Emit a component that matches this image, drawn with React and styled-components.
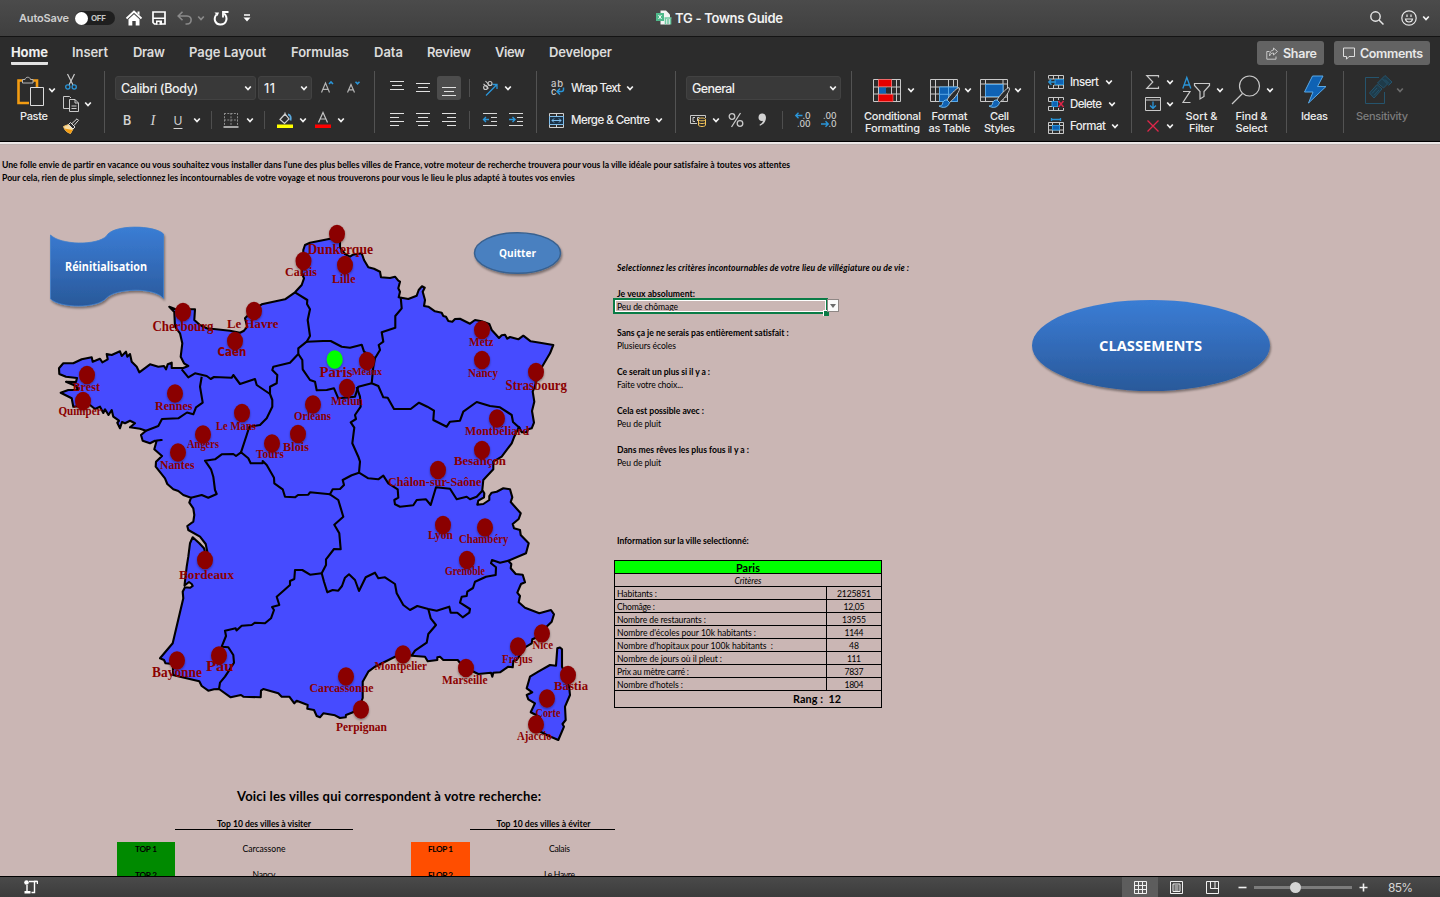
import React, { useLayoutEffect, useRef, useState } from "react";
import styled, { createGlobalStyle } from "styled-components";

const Global = createGlobalStyle`
  *, *::before, *::after { box-sizing: border-box; }
  body { margin: 0; background: #cab6b4; overflow: hidden; }
`;

const UI = `Inter, "Liberation Sans", sans-serif`;
const CELL = `Lato, "Open Sans", sans-serif`;

/* ---------- text that fills a known measure ---------- */
const FitSpan = styled.span`
  display: inline-block;
  white-space: pre;
  flex: none;
`;
function Fit({ w, children }) {
  const ref = useRef(null);
  const [ls, setLs] = useState(0);
  useLayoutEffect(() => {
    const natural = ref.current.getBoundingClientRect().width;
    setLs((w - natural) / Math.max(1, children.length - 1));
  }, [w, children]);
  return (
    <FitSpan ref={ref} style={{ letterSpacing: ls, marginRight: -ls }}>
      {children}
    </FitSpan>
  );
}

/* ---------- window frame ---------- */
const Window = styled.div`
  width: 1440px;
  height: 897px;
  display: flex;
  flex-direction: column;
  overflow: hidden;
  font-family: ${UI};
  color: #e6e6e6;
`;
const TitleBar = styled.header`
  height: 37px;
  flex: none;
  display: grid;
  grid-template-columns: 1fr auto 1fr;
  align-items: center;
  background: linear-gradient(#4b4b4b, #3f3f3f);
  border-bottom: 1px solid #141414;
`;
const QuickBar = styled.div`
  display: flex;
  align-items: center;
  padding-left: 19px;
  font-size: 11px;
  font-weight: 600;
  color: #cfcfcf;
`;
const Toggle = styled.span`
  width: 40px;
  height: 14px;
  margin-left: 6px;
  border-radius: 7px;
  background: #1f1f1f;
  display: flex;
  align-items: center;
  font-size: 8px;
  font-weight: 700;
  color: #c4c4c4;
  &::before {
    content: "";
    width: 13px;
    height: 13px;
    margin-right: 3px;
    border-radius: 50%;
    background: #fff;
  }
`;
const DocTitle = styled.div`
  display: flex;
  align-items: center;
  gap: 3px;
  margin-left: -1px;
  font-size: 13px;
  font-weight: 600;
  color: #f2f2f2;
`;
const TitleTools = styled.div`
  display: flex;
  align-items: center;
  justify-content: flex-end;
  padding-right: 10px;
`;
const TabBar = styled.nav`
  height: 34px;
  flex: none;
  display: flex;
  align-items: flex-start;
  padding: 4px 10px 0 11px;
  background: #2c2c2c;
`;
const Tab = styled.span`
  margin-right: ${(p) => p.$gap}px;
  height: 24px;
  line-height: 23px;
  font-size: 13px;
  font-weight: ${(p) => (p.$active ? 700 : 600)};
  color: ${(p) => (p.$active ? "#efefef" : "#dcdcdc")};
  border-bottom: 3px solid ${(p) => (p.$active ? "#e2e2e2" : "transparent")};
  border-radius: 1px;
`;
const TabButton = styled.button`
  display: flex;
  align-items: center;
  gap: 5px;
  width: ${(p) => p.$w}px;
  height: 24px;
  margin-left: ${(p) => p.$ml};
  padding: 0 0 0 9px;
  border: 0;
  border-radius: 3px;
  background: #636363;
  color: #e8e8e8;
  font: 600 12.5px ${UI};
`;

/* ---------- ribbon ---------- */
const Ribbon = styled.div`
  height: 74px;
  flex: none;
  display: flex;
  align-items: flex-start;
  background: #2c2c2c;
  box-shadow: inset 0 -1px 0 #bdb0ae, inset 0 -3px 0 #ece8e7, inset 0 -4px 0 #000;
`;
const Group = styled.section`
  width: ${(p) => p.$w}px;
  height: 62px;
  flex: none;
  display: flex;
  flex-direction: ${(p) => (p.$side ? "row" : "column")};
  gap: ${(p) => (p.$side ? 0 : 8)}px;
  padding-top: ${(p) => (p.$side ? 0 : 5)}px;
  border-right: 1px solid ${(p) => (p.$last ? "transparent" : "#535353")};
`;
const Row = styled.div`
  height: 24px;
  flex: none;
  display: flex;
  align-items: center;
  font-size: 11.5px;
  font-weight: 500;
  color: #ededed;
`;
const Stack = styled.div`
  margin-left: ${(p) => p.$ml || 0}px;
  display: flex;
  flex-direction: column;
`;
const StackRow = styled(Row)`
  height: 22px;
`;
const Item = styled.span`
  flex: none;
  width: ${(p) => p.$w}px;
  height: 24px;
  margin-left: ${(p) => p.$ml || 0}px;
  display: flex;
  align-items: center;
  justify-content: center;
  border-radius: 3px;
  background: ${(p) => (p.$on ? "#4c4c4c" : "transparent")};
`;
const Words = styled.span`
  margin-left: ${(p) => p.$ml}px;
`;
const Sep = styled.i`
  width: 1px;
  height: 18px;
  margin-left: ${(p) => p.$ml}px;
  background: #4e4e4e;
`;
const Combo = styled.div`
  width: ${(p) => p.$w}px;
  height: 24px;
  margin-left: ${(p) => p.$ml}px;
  padding: 0 3px 0 5px;
  display: flex;
  align-items: center;
  justify-content: space-between;
  border-radius: 3px;
  background: #393939;
  border: 1px solid #424242;
  font-size: 12.5px;
  font-weight: 500;
  color: #f0f0f0;
`;
const Big = styled.div`
  width: ${(p) => p.$w}px;
  margin-left: ${(p) => p.$ml}px;
  padding-top: 5px;
  font-size: 11px;
  font-weight: 500;
  line-height: 12px;
  color: ${(p) => (p.$dim ? "#7d7d7d" : "#ededed")};
`;
const BigIcon = styled.div`
  height: 28px;
  margin-bottom: 6px;
  padding-left: ${(p) => p.$pl}px;
  display: flex;
  align-items: center;
`;
const BigLabel = styled.div`
  display: flex;
  justify-content: center;
`;
const Svg = styled.svg`
  display: block;
  flex: none;
  overflow: visible;
  margin-left: ${(p) => p.$ml || 0}px;
`;

const Icon = ({ w, h, ml, children }) => (
  <Svg width={w} height={h} viewBox={`0 0 ${w} ${h}`} $ml={ml} fill="none" stroke="#c9c9c9" strokeWidth="1">
    {children}
  </Svg>
);
const Chev = ({ ml, c = "#f4f4f4" }) => (
  <Icon w={8} h={6} ml={ml}>
    <path d="M1.200 1.500 4 4.500 6.800 1.500" stroke={c} strokeWidth="1.700" />
  </Icon>
);
const Glyph = styled.span`
  font-family: ${(p) => (p.$serif ? '"Liberation Serif", serif' : UI)};
  font-size: ${(p) => p.$s}px;
  font-weight: ${(p) => p.$b || 400};
  font-style: ${(p) => (p.$i ? "italic" : "normal")};
  text-decoration: ${(p) => (p.$u ? "underline" : "none")};
  text-underline-offset: 3px;
  color: #d2d2d2;
`;
const Lines = ({ rows }) => (
  <Icon w={14} h={14}>
    {rows.map(([x1, x2, y]) => (
      <path key={y} d={`M${x1} ${y}.5H${x2}`} stroke="#e0e0e0" />
    ))}
  </Icon>
);
const GridLines = () => (
  <path d="M.5 .5H27.500V22.500H.5ZM.5 8H27.500M.5 15H27.500M5.500 .5V22.500M18.500 .5V22.500M23.500 .5V22.500" />
);
const Brush = () => (
  <>
    <path d="M29 8.500C26 9.500 19 17 17 21L19.500 23.500C23 21 29 14 29.500 10Z" fill="#2c2c2c" stroke="#c9c9c9" />
    <path d="M17 21C14 20.500 12.500 23 12.500 25 12 26.500 10.500 27 9 27 12 29 18 29.500 19.500 23.500Z" fill="#0f62b4" stroke="#6fb9ee" />
  </>
);

function FontGroup() {
  return (
    <Group $w={270}>
      <Row>
        <Combo $w={141} $ml={10}><Fit w={77}>Calibri (Body)</Fit><Chev /></Combo>
        <Combo $w={54} $ml={2}><Fit w={11}>11</Fit><Chev /></Combo>
        <Icon w={16} h={16} ml={7}>
          <path d="M2.500 12.500 6.500 3 10.500 12.500M4 9.300H9" stroke="#b5b5b5" strokeWidth="1.200" />
          <path d="M10 4 12 2 14 4" stroke="#2a95d8" strokeWidth="1.600" />
        </Icon>
        <Icon w={16} h={16} ml={10}>
          <path d="M2.500 12.500 6 4.500 9.500 12.500M3.700 9.800H8.300" stroke="#b5b5b5" strokeWidth="1.200" />
          <path d="M10.500 1.800 12.500 3.800 14.500 1.800" stroke="#2a95d8" strokeWidth="1.600" />
        </Icon>
      </Row>
      <Row>
        <Item $w={14} $ml={15}><Glyph $s={12.5} $b={600}>B</Glyph></Item>
        <Item $w={14} $ml={12}><Glyph $s={14.5} $serif $i>I</Glyph></Item>
        <Item $w={14} $ml={11}><Glyph $s={12} $u>U</Glyph></Item>
        <Chev ml={8} />
        <Sep $ml={10} />
        <Icon w={16} h={16} ml={11}>
          <path d="M1 1.500H15M1.500 1V14M14.500 1V14M8 1V14M1 8H15" stroke="#8c8c8c" strokeDasharray="2 1.300" />
          <path d="M.5 15H15.500" stroke="#e8e8e8" strokeWidth="1.300" />
        </Icon>
        <Chev ml={7} />
        <Sep $ml={10} />
        <Icon w={16} h={16} ml={12}>
          <path d="M3 7.500 8 2 12 7 7.500 11.500ZM8 4V.5" stroke="#d0d0d0" strokeWidth="1.200" />
          <path d="M11 2.500C14 3 14 6 13.500 8.500" stroke="#5aa9dd" strokeWidth="1.800" />
          <path d="M0 12.500H16V16H0Z" fill="#ff0" stroke="none" />
        </Icon>
        <Chev ml={6} />
        <Icon w={16} h={16} ml={8}>
          <path d="M3.500 10.500 8 .5 12.500 10.500M5.200 7H10.800" stroke="#c4c4c4" strokeWidth="1.200" />
          <path d="M0 12.500H16V16H0Z" fill="#f00" stroke="none" />
        </Icon>
        <Chev ml={6} />
      </Row>
    </Group>
  );
}

function AlignGroup() {
  return (
    <Group $w={162}>
      <Row>
        <Item $w={14} $ml={15}><Lines rows={[[0, 14, 0], [2, 12, 4], [0, 14, 8]]} /></Item>
        <Item $w={14} $ml={12}><Lines rows={[[0, 14, 2], [2, 12, 6], [0, 14, 10]]} /></Item>
        <Item $w={24} $ml={7} $on><Lines rows={[[0, 14, 6], [2, 12, 10], [0, 14, 14]]} /></Item>
        <Sep $ml={8} />
        <Icon w={16} h={16} ml={12}>
          <path d="M4 15.500 14.500 5M10.500 4.500H15V9" stroke="#2a95d8" strokeWidth="1.300" />
          <g stroke="#c9c9c9" strokeWidth="1.100">
            <circle cx="3.600" cy="7.500" r="2" />
            <path d="M1.500 3.800 6.500 8.500" />
            <circle cx="8" cy="3.500" r="2" />
            <path d="M3.500 1 8 6" />
          </g>
        </Icon>
        <Chev ml={6} />
      </Row>
      <Row>
        <Item $w={14} $ml={15}><Lines rows={[[0, 14, 0], [0, 9, 4], [0, 14, 8], [0, 9, 12]]} /></Item>
        <Item $w={14} $ml={12}><Lines rows={[[0, 14, 0], [2, 12, 4], [0, 14, 8], [2, 12, 12]]} /></Item>
        <Item $w={14} $ml={12}><Lines rows={[[0, 14, 0], [5, 14, 4], [0, 14, 8], [5, 14, 12]]} /></Item>
        <Sep $ml={13} />
        <Icon w={14} h={14} ml={13}>
          <path d="M0 .5H14M8 4.500H14M8 8.500H14M0 12.500H14" stroke="#d8d8d8" />
          <path d="M6 6.500H.8M3 4 .5 6.500 3 9" stroke="#2a95d8" strokeWidth="1.400" />
        </Icon>
        <Icon w={14} h={14} ml={12}>
          <path d="M0 .5H14M8 4.500H14M8 8.500H14M0 12.500H14" stroke="#d8d8d8" />
          <path d="M0 6.500H5.500M3.500 4 6 6.500 3.500 9" stroke="#2a95d8" strokeWidth="1.400" />
        </Icon>
      </Row>
    </Group>
  );
}

const SvgText = styled.text`
  font-family: ${UI};
  font-size: ${(p) => p.$s}px;
  fill: ${(p) => p.$c || "#c9c9c9"};
  stroke: none;
`;

function WrapGroup() {
  return (
    <Group $w={139}>
      <Row>
        <Icon w={16} h={16} ml={13}>
          <SvgText $s={9.5} x="1" y="6.500" textLength="12">ab</SvgText>
          <SvgText $s={9.5} x="1" y="15">c</SvgText>
          <path d="M13.500 7.500V9.500Q13.500 11.500 11.500 11.500H7.500M10 8.500 7 11.500 10 14.500" stroke="#2a95d8" strokeWidth="1.500" />
        </Icon>
        <Words $ml={5}><Fit w={50}>Wrap Text</Fit></Words>
        <Chev ml={5} />
      </Row>
      <Row>
        <Icon w={15} h={15} ml={12}>
          <path d="M.5 .5H14.500V14.500H.5ZM7.500 .5V3.500M7.500 11.500V14.500" stroke="#d0d0d0" />
          <path d="M.5 3.500H14.500V11.500H.5Z" stroke="#7dbdec" fill="#1b3247" />
          <path d="M3 7.500H12M5 5.500 3 7.500 5 9.500M10 5.500 12 7.500 10 9.500" stroke="#7dbdec" />
        </Icon>
        <Words $ml={7}><Fit w={79}>{"Merge & Centre"}</Fit></Words>
        <Chev ml={5} />
      </Row>
    </Group>
  );
}

function NumberGroup() {
  return (
    <Group $w={176}>
      <Row>
        <Combo $w={155} $ml={10}><Fit w={43}>General</Fit><Chev /></Combo>
      </Row>
      <Row>
        <Icon w={16} h={14} ml={14}>
          <path d="M7 10.500H.5V2.500H15.500V5M5 4.500H3V8.500H5M7.500 8V4.500H9.500" stroke="#c9c9c9" />
          <path d="M8.500 6.500C8.500 4.500 15.500 4.500 15.500 6.500V12C15.500 14 8.500 14 8.500 12Z" fill="#2c2c2c" stroke="#f5c55a" />
          <path d="M8.500 6.500C8.500 8.300 15.500 8.300 15.500 6.500M8.500 9.300C8.500 11 15.500 11 15.500 9.300" stroke="#f5c55a" />
        </Icon>
        <Chev ml={6} />
        <Icon w={16} h={16} ml={8}>
          <path d="M12.500 1 3.500 15" strokeWidth="1.300" />
          <circle cx="4" cy="4.500" r="2.800" strokeWidth="1.300" />
          <circle cx="12" cy="11.500" r="2.800" strokeWidth="1.300" />
        </Icon>
        <Icon w={8} h={14} ml={14}>
          <path d="M4 .5C6.500 .5 8 2 8 4.800 8 8.500 5.500 11.500 2 12.800L1.500 11.800C3.500 10.700 4.800 9.300 5 7.800 2.500 8.500 .5 7 .5 4.500 .5 2 2 .5 4 .5Z" fill="#d2d2d2" stroke="none" />
        </Icon>
        <Sep $ml={16} />
        <Icon w={16} h={16} ml={12}>
          <path d="M.8 3.500H7.500M3.500 .8 .8 3.500 3.500 6.200" stroke="#2a95d8" strokeWidth="1.400" />
          <SvgText $s={9} x="7.500" y="7" textLength="8" lengthAdjust="spacingAndGlyphs">.0</SvgText>
          <SvgText $s={9} x="2" y="15" textLength="13.500" lengthAdjust="spacingAndGlyphs">.00</SvgText>
        </Icon>
        <Icon w={16} h={16} ml={10}>
          <SvgText $s={9} x="2" y="7" textLength="13.500" lengthAdjust="spacingAndGlyphs">.00</SvgText>
          <path d="M0 12H6.700M4.500 9.300 7.200 12 4.500 14.700" stroke="#2a95d8" strokeWidth="1.400" />
          <SvgText $s={9} x="7.500" y="15" textLength="8" lengthAdjust="spacingAndGlyphs">.0</SvgText>
        </Icon>
      </Row>
    </Group>
  );
}

function StyleGroup() {
  return (
    <Group $w={183} $side>
      <Big $w={57} $ml={12}>
        <BigIcon $pl={9}>
          <Icon w={28} h={23}>
            <GridLines />
            <path d="M5.500 .5H18.500V7.500H5.500ZM5.500 15.500H20V22.500H5.500Z" fill="#e60000" stroke="#ff6a6a" strokeWidth=".6" />
            <path d="M13.500 8.500H18V14.500H13.500Z" fill="#2c2c2c" stroke="none" />
            <path d="M6 8.500H13V14.500H6Z" fill="#0f62b4" stroke="none" />
          </Icon>
          <Chev ml={6} />
        </BigIcon>
        <BigLabel><Fit w={57}>Conditional</Fit></BigLabel>
        <BigLabel><Fit w={55}>Formatting</Fit></BigLabel>
      </Big>
      <Big $w={41} $ml={8}>
        <BigIcon $pl={1}>
          <Icon w={30} h={23}>
            <GridLines />
            <path d="M9.500 8H27.500V22.500H9.500Z" fill="#0f62b4" stroke="#5aa9e6" />
            <path d="M9.500 15.300H27.500M18.500 8V22.500" stroke="#5aa9e6" />
            <Brush />
          </Icon>
          <Chev ml={4} />
        </BigIcon>
        <BigLabel><Fit w={36}>Format</Fit></BigLabel>
        <BigLabel><Fit w={42}>as Table</Fit></BigLabel>
      </Big>
      <Big $w={41} $ml={9}>
        <BigIcon $pl={1}>
          <Icon w={30} h={23}>
            <path d="M.5 .5H27.500V22.500H.5ZM.5 5H27.500M.5 18H27.500M5.500 .5V22.500M23 .5V22.500" />
            <path d="M5.500 5.500H23V17.500H5.500Z" fill="#0f62b4" stroke="#5aa9e6" />
            <Brush />
          </Icon>
          <Chev ml={4} />
        </BigIcon>
        <BigLabel><Fit w={19}>Cell</Fit></BigLabel>
        <BigLabel><Fit w={31}>Styles</Fit></BigLabel>
      </Big>
    </Group>
  );
}

function CellsGroup() {
  return (
    <Group $w={97} $side>
      <Stack $ml={13}>
        <StackRow>
          <Icon w={16} h={14}>
            <path d="M.5 3.500V.5H15.500V13.500H.5V10.500M5.500 .5V4M10.500 .5V4M5.500 10V13.500M10.500 10V13.500M.5 4H15.500M6 10H15.500" />
            <path d="M7 4.500H15.500V9.500H7Z" fill="#0f62b4" stroke="#2a95d8" />
            <path d="M.8 7H8M3.500 4.300 .8 7 3.500 9.700" stroke="#2a95d8" strokeWidth="1.400" />
          </Icon>
          <Words $ml={6}><Fit w={29}>Insert</Fit></Words>
          <Chev ml={6} />
        </StackRow>
        <StackRow>
          <Icon w={16} h={14}>
            <path d="M.5 4.500V.5H15.500V3M.5 9.500V13.500H15.500V11M5.500 .5V4M10.500 .5V3M5.500 10V13.500M10.500 11V13.500M.5 4.500H10M.5 9.500H10" />
            <path d="M4 4.500H9.500V9.500H4Z" fill="#0f62b4" stroke="#2a95d8" />
            <path d="M10.500 4 15.500 10M15.500 4 10.500 10" stroke="#e0264a" strokeWidth="1.400" />
          </Icon>
          <Words $ml={6}><Fit w={32}>Delete</Fit></Words>
          <Chev ml={6} />
        </StackRow>
        <StackRow>
          <Icon w={16} h={16}>
            <path d="M.5 4.500H15.500V15.500H.5ZM.5 7.500H15.500M.5 12H15.500M4.500 4.500V15.500M11.500 4.500V15.500" />
            <path d="M4.500 7.500H11.500V12H4.500Z" fill="#0f62b4" stroke="#2a95d8" />
            <path d="M3.500 1.500H12.500M3.500 0V3M12.500 0V3" stroke="#2a95d8" strokeWidth="1.300" />
          </Icon>
          <Words $ml={6}><Fit w={36}>Format</Fit></Words>
          <Chev ml={5} />
        </StackRow>
      </Stack>
    </Group>
  );
}

function EditGroup() {
  return (
    <Group $w={155} $side>
      <Stack $ml={13}>
        <StackRow>
          <Icon w={16} h={14}>
            <path d="M13.500 2.500V.7H1.800L7.800 7 1.800 13.300H13.500V11.500" strokeWidth="1.200" />
          </Icon>
          <Chev ml={5} />
        </StackRow>
        <StackRow>
          <Icon w={16} h={14}>
            <path d="M.5 .5H15.500V13.500H.5ZM.5 3H15.500" />
            <path d="M8 4.500V11M5 8.500 8 11.300 11 8.500" stroke="#2a95d8" strokeWidth="1.300" />
          </Icon>
          <Chev ml={5} />
        </StackRow>
        <StackRow>
          <Icon w={16} h={14}>
            <path d="M2.500 1.500 13.500 12.500M13.500 1.500 2.500 12.500" stroke="#e0264a" strokeWidth="1.300" />
          </Icon>
          <Chev ml={5} />
        </StackRow>
      </Stack>
      <Big $w={45} $ml={5}>
        <BigIcon $pl={3}>
          <Icon w={29} h={28}>
            <path d="M.8 12.500 4.800 1.500 8.800 12.500M2.200 9H7.400" stroke="#2a95d8" strokeWidth="1.300" />
            <path d="M1 15.500H8L1 26.500H8.500" strokeWidth="1.200" />
            <path d="M12.500 7.500H27.500V9.500L22 15.500V20.500L18 23V15.500L12.500 9.500Z" strokeWidth="1.200" />
          </Icon>
          <Chev ml={5} />
        </BigIcon>
        <BigLabel><Fit w={32}>{"Sort &"}</Fit></BigLabel>
        <BigLabel><Fit w={25}>Filter</Fit></BigLabel>
      </Big>
      <Big $w={45} $ml={5}>
        <BigIcon $pl={2}>
          <Icon w={30} h={30}>
            <circle cx="18.500" cy="11" r="10" strokeWidth="1.200" />
            <path d="M11.500 18.500 1 29" strokeWidth="1.300" />
          </Icon>
          <Chev ml={5} />
        </BigIcon>
        <BigLabel><Fit w={32}>{"Find &"}</Fit></BigLabel>
        <BigLabel><Fit w={32}>Select</Fit></BigLabel>
      </Big>
    </Group>
  );
}

function RibbonBar() {
  return (
    <Ribbon>
      <Group $w={105} $side>
        <Big $w={44} $ml={12}>
          <BigIcon $pl={5}>
            <Icon w={27} h={28}>
              <path d="M12 27H1.500V4.500H20V11" stroke="#f39c12" strokeWidth="2.600" />
              <path d="M5.500 7V3.500H8C8.500 .5 13 .5 13.500 3.500H16V7Z" fill="#2c2c2c" stroke="#b5b5b5" />
              <path d="M13.500 11.500H26.500V29.500H13.500Z" fill="#2c2c2c" stroke="#dcdcdc" />
            </Icon>
            <Chev ml={4} />
          </BigIcon>
          <BigLabel><Fit w={28}>Paste</Fit></BigLabel>
        </Big>
        <Stack $ml={7}>
          <StackRow>
            <Icon w={16} h={16}>
              <path d="M4.500 0 10 11M11.500 0 6 11" strokeWidth="1.200" />
              <circle cx="4.800" cy="13" r="2.100" stroke="#2a95d8" strokeWidth="1.300" />
              <circle cx="11.200" cy="13" r="2.100" stroke="#2a95d8" strokeWidth="1.300" />
            </Icon>
          </StackRow>
          <StackRow>
            <Icon w={16} h={16}>
              <path d="M6 12.500H.5V.5H6.500L8 2" />
              <path d="M6.500 3.500H12L15.500 7V15.500H6.500ZM12 3.500V7H15.500M8.500 10H13.500M8.500 12.500H13.500" />
            </Icon>
            <Chev ml={5} />
          </StackRow>
          <StackRow>
            <Icon w={16} h={16}>
              <path d="M.5 8.500 5.500 6.500 10 11 7.500 15.500C4 14.500 1.500 12 .5 8.500Z" fill="#f6dca4" stroke="#f2c166" />
              <path d="M1.500 10.500 9.500 12 7.500 15.500C5 15 2.500 13 1.500 10.500Z" fill="#f39c12" stroke="none" />
              <path d="M5.500 6.500 7.500 4.500 12 9 10 11ZM9 5.500 14 .8 15.500 2.300 11 7.500" fill="#2c2c2c" stroke="#dcdcdc" />
            </Icon>
          </StackRow>
        </Stack>
      </Group>
      <FontGroup />
      <AlignGroup />
      <WrapGroup />
      <NumberGroup />
      <StyleGroup />
      <CellsGroup />
      <EditGroup />
      <Group $w={57} $side>
        <Big $w={31} $ml={12}>
          <BigIcon $pl={4}>
            <Icon w={24} h={30}>
              <path d="M9.500 1H20L14.500 11.500H23L5.500 28 10 17H1.500Z" fill="#0f62b4" stroke="#5aa9e6" />
            </Icon>
          </BigIcon>
          <BigLabel><Fit w={27}>Ideas</Fit></BigLabel>
        </Big>
      </Group>
      <Group $w={96} $side $last>
        <Big $w={52} $ml={12} $dim>
          <BigIcon $pl={9}>
            <Icon w={28} h={30}>
              <g stroke="#25546d">
                <path d="M14 2.500H.5V28.500H19.500V17" />
                <path d="M4.500 18 12 9.500 17 14 9 23ZM7 18.500 12 13M9 20.500 14 15" fill="#1e3b4a" />
                <path d="M12.500 8 17 3.500 22.500 9 18.500 13ZM17 3.500 20 .5 27 7 23.500 10.500M20 4.500 24 8.500" fill="#1e3b4a" />
              </g>
            </Icon>
            <Chev ml={3} c="#6c6c6c" />
          </BigIcon>
          <BigLabel><Fit w={52}>Sensitivity</Fit></BigLabel>
        </Big>
      </Group>
    </Ribbon>
  );
}

/* ---------- worksheet ---------- */
const Sheet = styled.main`
  position: relative;
  height: 731px;
  flex: none;
  overflow: hidden;
  background: #cab6b4;
  font-family: ${CELL};
  font-size: 8.6px;
  line-height: 13px;
  color: #000;
`;
const Intro = styled.div`
  padding: 14px 0 0 2px;
  height: 117px;
  font-weight: 700;
`;
const Line = styled.div`
  height: 13px;
  white-space: nowrap;
  font-weight: ${(p) => (p.$b ? 700 : 400)};
  font-style: ${(p) => (p.$i ? "italic" : "normal")};
`;
const Criteria = styled.div`
  margin-left: 614px;
  width: 268px;
  height: 273px;
  padding-left: 3px;
`;
const InfoHead = styled.div`
  margin-left: 614px;
  padding-left: 3px;
  height: 13px;
`;
const Pair = styled.div`
  margin-top: 13px;
`;
const Picked = styled.div`
  position: relative;
  height: 13px;
  &::before {
    content: "";
    position: absolute;
    left: -4px;
    top: -3px;
    width: 215px;
    height: 16px;
    border: 2px solid #0a7c46;
    box-shadow: inset 0 0 0 1px #fff;
  }
  &::after {
    content: "";
    position: absolute;
    left: 206px;
    top: 9px;
    width: 6px;
    height: 6px;
    background: #0a7c46;
    border: solid #fff;
    border-width: 1px 0 0 1px;
  }
`;
const DropArrow = styled.i`
  position: absolute;
  z-index: 1;
  left: 210px;
  top: -2px;
  width: 12px;
  height: 13px;
  display: flex;
  align-items: center;
  justify-content: center;
  background: #fafafa;
  border: 1px solid #8f8785;
  &::before {
    content: "";
    border: solid transparent;
    border-width: 4px 3.5px 0;
    border-top-color: #6b6b6b;
  }
`;
const InfoTable = styled.div`
  margin: 12px 0 0 614px;
  width: 268px;
  border: 1px solid #000;
`;
const InfoRow = styled.div`
  height: ${(p) => p.$h || 13}px;
  line-height: 14px;
  display: grid;
  grid-template-columns: ${(p) => (p.$span ? "1fr" : "211px 1px 1fr")};
  justify-items: ${(p) => (p.$span ? "center" : "start")};
  background: ${(p) => (p.$lime ? "#00ff00" : "transparent")};
  border-bottom: ${(p) => (p.$end ? 0 : 1)}px solid #000;
  font-size: ${(p) => (p.$s ? p.$s : 8.6)}px;
  font-weight: ${(p) => (p.$b ? 700 : 400)};
  font-style: ${(p) => (p.$i ? "italic" : "normal")};
`;
const InfoName = styled.span`
  padding-left: 2px;
`;
const Rule = styled.i`
  width: 1px;
  height: 12px;
  background: #000;
`;
const InfoValue = styled.span`
  justify-self: center;
`;
const Rank = styled.span`
  justify-self: start;
  padding: 1px 0 0 178px;
`;
const Results = styled.section`
  margin-top: 79px;
  width: 615px;
`;
const ResultTitle = styled.h2`
  margin: 0;
  height: 18px;
  padding-left: 237px;
  font-size: 13px;
  line-height: 18px;
`;
const ResultCols = styled.div`
  display: flex;
  margin-top: 13px;
  padding-left: 117px;
  gap: 58px;
`;
const ResultCol = styled.div`
  display: grid;
  grid-template-columns: ${(p) => p.$cols};
`;
const ColHead = styled.div`
  grid-column: 2;
  height: 12px;
  margin-bottom: 12px;
  padding-left: ${(p) => p.$shift || 0}px;
  display: flex;
  justify-content: center;
  font-weight: 700;
  border-bottom: 1px solid #000;
`;
const Badge = styled.div`
  grid-column: 1;
  height: 26px;
  text-align: center;
  font-size: 8.2px;
  line-height: 14px;
  font-weight: 700;
  background: ${(p) => p.$c};
`;
const Town = styled.div`
  height: 26px;
  padding-left: ${(p) => p.$shift || 0}px;
  line-height: 14px;
  text-align: center;
`;

const Drawing = styled.svg`
  position: absolute;
  left: 0;
  top: 0;
  pointer-events: none;
`;
const CityName = styled.text`
  font-family: ${(p) => (p.$sans ? '"DejaVu Sans", sans-serif' : '"Liberation Serif", serif')};
  font-weight: 700;
  fill: #8b0000;
`;
const ShapeLabel = styled.text`
  font-family: "Comic Sans MS", "Open Sans", sans-serif;
  font-weight: 700;
  fill: #fff;
`;

const MAINLAND =
  "M303.300 250 305 245 310 242.700 332.700 238.300 340 240.700 340 247.300 345 254 350 256.700 353 254.700 361.700 253.300 364 260 368.300 267.300 374 268.700 380 271.700 381 277.300 390 278 395 276.700 398.300 280.700 400 281.700 398.300 288.300 400 291.700 398.700 297.300 408.300 299 416.700 295.700 418.700 290 422 286.300 424.700 287.700 422.700 291.700 425 300 424 306 428.300 306.700 435 311.300 441.700 312.700 443.300 316 446 316.700 448.300 321 452.300 321.700 455 319 460 318.700 470 323.700 475 320 481.700 321.300 489.300 324 491.700 330 499 338 501.700 335.300 505 334.700 507.300 338.700 510 337 518.300 339.300 523.300 335.700 530.700 341.300 540 342.700 553.300 345 550 353.300 545 361.700 538.300 373.300 536 383.300 532.700 391.700 534.300 401.700 532 411 534 422.700 531.700 428.300 528.300 429.300 526.700 432.300 521.700 432.300 519 427 514 437.300 511.700 443.300 501.700 456.700 493.300 461.700 493.300 469.300 483.300 480 482.300 490 484.300 493.300 484 497.300 478.300 500.700 477.300 504.700 483.300 504 489.300 500 489.300 496 491.700 492.700 496.700 491.700 503.300 488.300 510 489.300 512.300 497.300 510.700 502 520.700 513.300 518.700 519 512.700 524 514 528.300 520 530 520.700 535 528.700 543.300 526 553.300 508.300 560.700 511.300 564 510.700 568.300 515.700 574 522.700 574.700 525 582.300 521 584 517.300 592.700 520 596 518.700 602.300 525 607.700 539.300 613.300 551 610 554 614.300 551.700 621.700 545 628.300 538.300 636.700 532.300 639.300 531.700 643.300 525 647.300 520 655 516.700 660 513.300 661 512.700 667.300 508.300 666.700 500 672.300 493.300 672.700 492.300 676.700 491 672.700 478.300 674 470 670 461.700 665 457.700 660 443.300 660 440 656.700 437.300 657.300 437.300 660 427.700 661.300 425 656.700 411.700 655.700 403.300 654.300 395 656.700 385 661.700 375 666.700 368.300 671.700 362.700 681.700 362.700 698 358.300 710 351.700 712.700 346 715 345.700 717.300 340 718 335 715.300 323.300 713.300 320 717.300 316.700 716 314 710 307.300 708.700 307.700 705 296.700 700.700 294.300 703.300 289.300 696.700 281.700 696.700 278.300 693.300 263.300 689 261 690.700 260.700 697.300 243.300 696.700 241 695 230.700 697.300 219 689 214 689.300 208.300 690.700 201.700 686 199.300 681.300 180 676.700 173 675 173 664 165.500 663.300 164 660 160 658.300 172.700 643.300 183.300 598.300 182.700 591.700 185 587.300 190 587.800 192.700 586 191.700 584 189 582 184.500 585.500 186.700 566.700 188.300 556.700 190 543.300 192.700 537.300 199.300 543.300 204 548.300 205 552 207.300 551.700 205.700 544 200 536.700 188.300 530 187.300 526 193.300 521.700 194.300 515 193.300 508.300 189.300 502.700 191 497.700 183.300 495 178.300 491 173.300 489.300 167.300 484 165 478.300 155.700 466.700 156 461.700 162 456 154.300 449.300 156.700 440.500 161.700 440 155 440.700 150 443.300 142.700 440.700 141 435 146 430.700 140 428.700 130 427.300 135 423.300 130 420.700 125 423.300 122 422 120 428.300 117.300 422.700 119 420.700 113.300 416.700 111.700 410 108.500 415 105 409.300 103.300 413 100 406.700 95 409 90 405 73.300 406.700 71.700 398.300 60.700 392.700 68.300 390 78 390 76 386 66 381.700 76 382 77 378 66 376.700 59.300 374 59 368.300 63.300 363.300 73.300 363.300 81.700 359.300 91.700 357.300 92.700 361.700 100 358.700 102.300 362.300 107.700 359.300 106.700 354 111.700 355 120 351.300 121.700 356 126 351.700 127.300 356.700 130 354 131.700 361.700 136.700 366.700 139.300 372.300 150 364.300 158.300 366.700 164 366 166 369.300 167.700 364.300 171.700 362.700 171.700 368 183.300 368 188.300 366 184 363.300 180.700 356.700 182.300 343.300 180 333.300 175 326.700 174.300 312 169.300 306.700 175 309 195 309.300 194.300 320 200 325 206.700 328.300 230 330.700 240 332.700 244 330.700 247.300 326.700 245 318.300 253.300 310 261.700 304.300 285 299.300 295 292.300 301.700 285 304 278.300 301.700 273.300 303.300 262Z";
const CORSICA =
  "M557.300 648.300 560 647.500 562 649.300 562 666.700 566 675 569.300 688.300 570 695 565 706.700 565.700 720 562.500 724 564 726.700 558.300 740 546.700 735 533.300 728 540 717 530.700 712.300 535 703.300 528.300 699.300 526.700 695 532.300 692.300 526.700 688.300 530 676.700 538.300 671.700 550 665 556 665.700Z";
const BORDERS = [
  "M295 292.300 307.300 300 307 304 310 309.300 307.700 320 310 336 306.700 341.700 298.300 348.300 298.300 354 290 362.700 273.300 366.700 272.300 370 277.300 375 276.700 383.300 270 386.700 270 394 272.300 400 272.300 406.700 266.700 418.300 260 425 249.300 426.700 246.700 435 241 452.300",
  "M181.700 369.300 188.300 377.300 195 373.300 206.700 376 210.700 379 214 377 231.700 377.700 233.300 375 240 384 255 379 256.700 385 270 394",
  "M201.700 376.700 200 386.700 202.700 402.700 196 407.300 193.300 414.300 187 412.500 178.300 418.300 162 419 158.300 426 146 430.700",
  "M191 497.700 201.700 495 208.300 497.700 216.700 494 215 490 213.300 476.700 211 469.300 205 460.700 215 459.300 221.700 454.300 233.300 454 236 456 241 452.300 248.300 458.300 250.700 463.300 262.700 463.300 262.700 461 266.700 465 274 477.700 274.300 483.300 282.700 489.300 285 496.700 295 497.300 298 495 308.300 494.700 310 492.300 330 494.300",
  "M356.700 387 360 396.700 360.700 406.700 355 415 356 419 350.700 422.300 354.300 427.700 352.300 443.300 358.300 456.700 360 461.700 359 472.700 351.700 475.300 342.700 480 344 485 340 489 332.700 489.300 330 494.300 338.300 500 343.300 516.700 334.300 524.700 339.300 533.300 340.700 549.300 334 549 326 559.300 326 565 321.700 573.300",
  "M359 472.700 368.300 478.300 378.300 479.300 383.300 475.700 388.300 483.300 397.700 489.300 398.300 497.700 394.300 500 395 504.300 400 506.700 413.300 505.300 416.700 500 426 499.300 430.700 505 436 487.300 450 488.700 456.700 499.300 466.700 496.700 470 499.300 476.700 496.700 482.300 490.700",
  "M306.700 341.700 323.300 341 330.700 341 341.700 346.700 350 347.700 361.700 344.700 364 351.700 374.500 358",
  "M371.700 383.300 358.300 386.700 355 396.700 338.300 398.300 334 388.300 326.700 390 316.700 390.300 315 381.700 310 380 302.700 369.300 302.300 360 298.300 354",
  "M400.700 297.300 401.700 308.300 395.300 316 395.300 327.700 381.700 332.300 383.300 341.700 378.700 345 380 350 375 358.300 373.300 366.700 371.700 383.300 378.300 386 383.300 397.300 387.700 397.700 394 409 410.700 409 419 402.700 427.300 406.700 434 410.700 433.300 420 446.700 426.700 450 421.700 460 420.700 463.300 411.700 476.700 402 490 406 500 407.300 511.700 415 513 422 520 428.300",
  "M219 689 220 682.700 225 676.700 228.300 671.700 234 662.700 233.300 655 228.300 647.300 221.700 646.700 226 636 225 630.700 235.700 628.300 236.500 630.500 241.700 625.700 251.700 625 255 622.700 265 623.300 271 618.300 274 610 272 607 279.300 605 276.700 596.700 290 585 290 581 294.300 579 295 570 302.300 570 310 574.700 321.700 573.300 324 581.700 327.300 592.300 332.700 590 338.300 590.700 342 586 345 577.700 349 574.300 355 580 359 591 365.700 577.300 375 572.700 378.300 578.300 385 577.300 395 584 396.700 593.300 403.300 605 410 610 417.300 606 428.300 609 436.700 610.700 449.300 606.700 450.700 612.700 457.300 612.700 462.700 617.300 469.300 612.700 470 609 460 602.700 461.700 596.700 466.700 596 467.300 591.700 473 588 475 581.700 486 576.700 495.700 575 496 567.300 491 563.300 492 560 500 562.700 508.300 560.700",
  "M428.300 609 430.700 618.300 436 625 428.300 634 426.700 642.700 415 650.700 411.700 655.700",
];

/* name, pin x, pin y, label left, label width, baseline, size */
const CITIES = [
  ["Dunkerque", 337, 234, 307.5, 65.5, 254, 14],
  ["Calais", 303.5, 261, 285, 32, 276, 13.5],
  ["Lille", 345, 265, 332, 23.5, 283, 13],
  ["Le Havre", 254, 311, 227, 51.5, 328.5, 13.5],
  ["Cherbourg", 183, 312, 152.5, 61, 331, 14],
  ["Caen", 235, 341, 217.5, 29, 356, 12],
  ["Meaux", 367, 361, 352, 30, 375.5, 11],
  ["Paris", 334.7, 359.5, 319.5, 33, 377.5, 15],
  ["Melun", 347, 388, 331, 32, 405, 13],
  ["Orleans", 313, 404.5, 294, 37, 420.5, 12],
  ["Metz", 482, 330, 469, 24.5, 346, 11.5],
  ["Nancy", 482, 360, 468, 30, 377, 12],
  ["Strasbourg", 536, 372, 505.5, 61.5, 390, 14],
  ["Montbéliard", 497, 418.5, 465, 64, 435, 13.5],
  ["Besançon", 482, 450, 454, 52, 465, 13],
  ["Châlon-sur-Saône", 438, 470, 388, 93.5, 486, 13.5],
  ["Lyon", 443, 525, 428, 25, 539, 13.5],
  ["Chambéry", 485, 527.5, 459, 49.5, 543, 12.5],
  ["Grenoble", 467, 560, 445, 40, 575, 11.5],
  ["Brest", 87, 375, 72.5, 27.5, 391, 13.5],
  ["Quimper", 83, 401, 58.5, 43, 415, 13],
  ["Rennes", 175, 393.5, 155, 37.5, 410, 13],
  ["Le Mans", 242, 413, 216, 40, 430, 13],
  ["Angers", 203, 434.5, 187, 32, 448, 12],
  ["Nantes", 178, 452.5, 160, 34.5, 469, 13],
  ["Tours", 272, 443.5, 256, 28, 458.5, 13],
  ["Blois", 298, 434, 283, 26, 451, 13.5],
  ["Bordeaux", 205, 560, 179, 55, 579, 13],
  ["Bayonne", 177, 660.5, 152, 50, 677, 14.5],
  ["Pau", 219, 655.5, 206, 27.5, 671, 14.5],
  ["Carcassonne", 346, 676.5, 309.5, 64, 692, 13.5],
  ["Perpignan", 361, 709.5, 336, 51, 731, 13],
  ["Montpelier", 403, 654.5, 374.5, 52.5, 670.5, 13],
  ["Marseille", 466, 668, 442, 45.5, 684, 13.5],
  ["Fréjus", 518, 646.5, 502, 30.5, 663, 13],
  ["Nice", 542, 633.5, 532.5, 20.5, 649, 12],
  ["Bastia", 568, 675, 554, 34, 690, 13],
  ["Corte", 547, 698.5, 535.5, 25, 717, 12],
  ["Ajaccio", 536, 724.5, 517, 34.5, 740.5, 13],
];

function Drawings() {
  return (
    <Drawing width="1440" height="731" viewBox="0 145 1440 731">
      <defs>
        <linearGradient id="blue" x1="0" y1="0" x2="0" y2="1">
          <stop offset="0" stopColor="#3a7dd4" />
          <stop offset="0.3" stopColor="#3672c4" />
          <stop offset="1" stopColor="#29599a" />
        </linearGradient>
        <filter id="drop" x="-20%" y="-20%" width="140%" height="150%">
          <feDropShadow dx="1" dy="2" stdDeviation="1.300" floodColor="#000" floodOpacity=".4" />
        </filter>
        <filter id="pin" x="-30%" y="-30%" width="160%" height="170%">
          <feDropShadow dx="0" dy="1.200" stdDeviation="1" floodColor="#000" floodOpacity=".4" />
        </filter>
      </defs>
      <g fill="#464bff" stroke="#000" strokeWidth="2.100" strokeLinejoin="round">
        <path d={MAINLAND} />
        <path d={CORSICA} />
        {BORDERS.map((d) => (
          <path key={d.slice(0, 16)} d={d} fill="none" />
        ))}
      </g>
      {CITIES.map(([name, px, py, lx, lw, by, size]) => (
        <g key={name}>
          <ellipse cx={px} cy={py} rx="8" ry="9.300" fill={name === "Paris" ? "#00ff00" : "#8b0000"} filter="url(#pin)" />
          <CityName $sans={name === "Caen"} fontSize={size} x={lx} y={by - 0.4} textLength={lw} lengthAdjust="spacingAndGlyphs">
            {name}
          </CityName>
        </g>
      ))}
      <path
        d="M50.500 235C60 245 97 246 106.500 236 113 224 155 225 163.500 234V298.500C155 287 116 288 106.500 298 97 309 60 308 50.500 299Z"
        fill="url(#blue)" stroke="#3f7fcb" strokeWidth=".8" filter="url(#drop)"
      />
      <ShapeLabel fontSize="12" x="65" y="271" textLength="82" lengthAdjust="spacingAndGlyphs">Réinitialisation</ShapeLabel>
      <ellipse cx="517.500" cy="253" rx="43" ry="20.300" fill="#4a80c0" stroke="#38618f" strokeWidth="1.500" filter="url(#drop)" />
      <ShapeLabel fontSize="11" x="499" y="257" textLength="37" lengthAdjust="spacingAndGlyphs">Quitter</ShapeLabel>
      <ellipse cx="1151" cy="345.500" rx="119" ry="45.500" fill="url(#blue)" filter="url(#drop)" />
      <ShapeLabel fontSize="14.500" x="1099" y="351" textLength="103" lengthAdjust="spacingAndGlyphs">CLASSEMENTS</ShapeLabel>
    </Drawing>
  );
}

const CHOICES = [
  ["Sans ça je ne serais pas entièrement satisfait :", 172, "Plusieurs écoles", 59],
  ["Ce serait un plus si il y a :", 93, "Faite votre choix...", 66],
  ["Cela est possible avec :", 87, "Peu de pluit", 44],
  ["Dans mes rêves les plus fous il y a :", 132, "Peu de pluit", 44],
];
const FACTS = [
  ["Habitants :", 40, "2125851", 34],
  ["Chomâge :", 38, "12,05", 21],
  ["Nombre de restaurants :", 89, "13955", 24],
  ["Nombre d'écoles pour 10k habitants :", 139, "1144", 19],
  ["Nombre d'hopitaux pour 100k habitants  :", 156, "48", 10],
  ["Nombre de jours où il pleut :", 105, "111", 14],
  ["Prix au mètre carré :", 72, "7837", 19],
  ["Nombre d'hotels :", 66, "1804", 19],
];

function Worksheet() {
  return (
    <Sheet>
      <Intro>
        <Line $b><Fit w={788}>Une folle envie de partir en vacance ou vous souhaitez vous installer dans l'une des plus belles villes de France, votre moteur de recherche trouvera pour vous la ville idéale pour satisfaire à toutes vos attentes</Fit></Line>
        <Line $b><Fit w={573}>Pour cela, rien de plus simple, selectionnez les incontournables de votre voyage et nous trouverons pour vous le lieu le plus adapté à toutes vos envies</Fit></Line>
      </Intro>
      <Criteria>
        <Line $b $i><Fit w={292}>Selectionnez les critères incontournables de votre lieu de villégiature ou de vie :</Fit></Line>
        <Pair>
          <Line $b><Fit w={78}>Je veux absolument:</Fit></Line>
          <Picked><Fit w={61}>Peu de chômage</Fit><DropArrow /></Picked>
        </Pair>
        {CHOICES.map(([q, qw, a, aw]) => (
          <Pair key={q}>
            <Line $b><Fit w={qw}>{q}</Fit></Line>
            <Line><Fit w={aw}>{a}</Fit></Line>
          </Pair>
        ))}
      </Criteria>
      <InfoHead>
        <Line $b><Fit w={132}>Information sur la ville selectionné:</Fit></Line>
      </InfoHead>
      <InfoTable>
        <InfoRow $span $lime $b $s={10.8}><Fit w={24}>Paris</Fit></InfoRow>
        <InfoRow $span $i><Fit w={27}>Critères</Fit></InfoRow>
        {FACTS.map(([n, nw, v, vw]) => (
          <InfoRow key={n}>
            <InfoName><Fit w={nw}>{n}</Fit></InfoName>
            <Rule />
            <InfoValue><Fit w={vw}>{v}</Fit></InfoValue>
          </InfoRow>
        ))}
        <InfoRow $span $b $end $h={16} $s={10.8}><Rank><Fit w={48}>{"Rang :  12"}</Fit></Rank></InfoRow>
      </InfoTable>
      <Results>
        <ResultTitle><Fit w={304}>Voici les villes qui correspondent à votre recherche:</Fit></ResultTitle>
        <ResultCols>
          <ResultCol $cols="58px 178px">
            <ColHead><Fit w={94}>Top 10 des villes à visiter</Fit></ColHead>
            <Badge $c="#008a00"><Fit w={22}>TOP 1</Fit></Badge>
            <Town><Fit w={43}>Carcassone</Fit></Town>
            <Badge $c="#008a00"><Fit w={22}>TOP 2</Fit></Badge>
            <Town><Fit w={23}>Nancy</Fit></Town>
          </ResultCol>
          <ResultCol $cols="59px 145px">
            <ColHead $shift={2}><Fit w={94}>Top 10 des villes à éviter</Fit></ColHead>
            <Badge $c="#ff4e00"><Fit w={25}>FLOP 1</Fit></Badge>
            <Town $shift={34}><Fit w={21}>Calais</Fit></Town>
            <Badge $c="#ff4e00"><Fit w={25}>FLOP 2</Fit></Badge>
            <Town $shift={34}><Fit w={31}>Le Havre</Fit></Town>
          </ResultCol>
        </ResultCols>
      </Results>
      <Drawings />
    </Sheet>
  );
}

/* ---------- status bar ---------- */
const StatusBar = styled.footer`
  height: 21px;
  flex: none;
  display: flex;
  align-items: center;
  background: linear-gradient(#4a4a4a, #3c3c3c);
  border-top: 1px solid #000;
  font-size: 12px;
  color: #d6d6d6;
`;
const ViewButton = styled.span`
  width: 36px;
  height: 20px;
  margin-left: ${(p) => p.$ml || 0};
  display: flex;
  align-items: center;
  justify-content: center;
  background: ${(p) => (p.$on ? "#5d5d5d" : "transparent")};
`;
const Slider = styled.div`
  width: 98px;
  height: 11px;
  margin-left: 7px;
  display: flex;
  align-items: center;
  background: linear-gradient(#7c7c7c, #7c7c7c) center / 100% 3px no-repeat;
  &::before {
    content: "";
    width: 11px;
    height: 11px;
    margin-left: 36px;
    border-radius: 50%;
    background: #d4d4d4;
  }
`;
const Percent = styled.span`
  margin: 0 27px 0 20px;
`;

export default function App() {
  return (
    <Window>
      <Global />
      <TitleBar>
        <QuickBar>
          <Fit w={50}>AutoSave</Fit>
          <Toggle><Fit w={15}>OFF</Fit></Toggle>
          <Icon w={16} h={16} ml={11}>
            <path d="M.5 8.500 8 1.500 15.500 8.500" stroke="#fff" strokeWidth="1.800" />
            <path d="M2.500 9.200 8 4.200 13.500 9.200V15.500H9.700V11H6.300V15.500H2.500ZM11.500 1.500H13.500V5L11.500 3.500Z" fill="#fff" stroke="none" />
          </Icon>
          <Icon w={14} h={14} ml={10}>
            <path d="M1 1H13V13H2.500L1 11.500Z" stroke="#fff" strokeWidth="1.700" />
            <path d="M1 6.500H13V8H1ZM4 9.500H10V13.500H4Z" fill="#fff" stroke="none" />
            <path d="M5.500 11H7.500V13.500H5.500Z" fill="#454545" stroke="none" />
          </Icon>
          <Icon w={16} h={14} ml={11}>
            <path d="M5.500 .8 1.200 5 5.500 9.200M1.500 5H10C16 5 15 13 10 13H8.500" stroke="#8a8a8a" strokeWidth="1.600" />
          </Icon>
          <Chev ml={4} c="#8a8a8a" />
          <Icon w={16} h={16} ml={8}>
            <path d="M3.500 4.500C-.5 9.500 3 14.800 7.500 14.500 13.500 14.500 15.500 7.500 11 3.500" stroke="#fff" strokeWidth="2" />
            <path d="M15.500 2H10V7.500" stroke="#fff" strokeWidth="1.800" />
            <path d="M1.500 2.500H6L4.500 6Z" fill="#fff" stroke="none" />
          </Icon>
          <Icon w={8} h={8} ml={14}>
            <path d="M1 1H7" stroke="#fff" strokeWidth="1.500" />
            <path d="M.5 3.500H7.500L4 7.500Z" fill="#fff" stroke="none" />
          </Icon>
        </QuickBar>
        <DocTitle>
          <Icon w={16} h={16}>
            <path d="M4.500 .5H10L14 4.500V14.500H4.500Z" fill="#f4f4f4" stroke="none" />
            <path d="M0 3H8V11H0Z" fill="#4fb98b" stroke="none" />
            <path d="M2.500 5 5.500 9M5.500 5 2.500 9" stroke="#fff" />
            <path d="M8.500 8H15.500M9.500 8V14.500M14.500 8V14.500M12 9V14" stroke="#6fc9a2" strokeWidth="1.600" />
          </Icon>
          <Fit w={108}>TG - Towns Guide</Fit>
        </DocTitle>
        <TitleTools>
          <Icon w={14} h={14}>
            <circle cx="5.500" cy="5.500" r="4.700" stroke="#e6e6e6" strokeWidth="1.400" />
            <path d="M9 9 13.500 13.500" stroke="#e6e6e6" strokeWidth="1.500" />
          </Icon>
          <Icon w={16} h={16} ml={17}>
            <circle cx="8" cy="8" r="7.200" stroke="#e6e6e6" strokeWidth="1.200" />
            <path d="M4.500 9C5 13 11 13 11.500 9ZM6 4.500V7M10 4.500V7" stroke="#e6e6e6" strokeWidth="1.200" />
          </Icon>
          <Chev ml={5} />
        </TitleTools>
      </TitleBar>
      <TabBar>
        <Tab $active $gap={24}><Fit w={37}>Home</Fit></Tab>
        <Tab $gap={25}><Fit w={36}>Insert</Fit></Tab>
        <Tab $gap={24}><Fit w={32}>Draw</Fit></Tab>
        <Tab $gap={25}><Fit w={77}>Page Layout</Fit></Tab>
        <Tab $gap={25}><Fit w={58}>Formulas</Fit></Tab>
        <Tab $gap={24}><Fit w={29}>Data</Fit></Tab>
        <Tab $gap={24}><Fit w={44}>Review</Fit></Tab>
        <Tab $gap={24}><Fit w={30}>View</Fit></Tab>
        <Tab $gap={0}><Fit w={63}>Developer</Fit></Tab>
        <TabButton $w={67} $ml="auto">
          <Icon w={12} h={13}>
            <path d="M3.500 4.500H.8V12.200H10V9.500" />
            <path d="M7.500 1 11.500 4.500 7.500 8V6C5.500 6 4.500 7 3.500 9 3.500 5.500 5 3.200 7.500 3Z" />
          </Icon>
          <Fit w={34}>Share</Fit>
        </TabButton>
        <TabButton $w={96} $ml="10px">
          <Icon w={12} h={13}>
            <path d="M.5 1H11.500V9.500H6L3.500 12.200V9.500H.5Z" stroke="#dedede" />
          </Icon>
          <Fit w={63}>Comments</Fit>
        </TabButton>
      </TabBar>
      <RibbonBar />
      <Worksheet />
      <StatusBar>
        <Icon w={14} h={14} ml={24}>
          <circle cx="2.500" cy="2.500" r="2.300" fill="#fff" stroke="none" />
          <path d="M5 1.500H13M10.500 1.500V12.500H7.500M3 5V11" stroke="#fff" strokeWidth="1.400" />
          <path d="M.5 11H6.500V13.500H.5ZM10 .8H14V4H12.800V2H10Z" fill="#fff" stroke="none" />
        </Icon>
        <ViewButton $on $ml="auto">
          <Icon w={13} h={13}><path d="M.5 .5H12.500V12.500H.5ZM.5 4.500H12.500M.5 8.500H12.500M4.500 .5V12.500M8.500 .5V12.500" stroke="#f0f0f0" /></Icon>
        </ViewButton>
        <ViewButton>
          <Icon w={13} h={13}><path d="M.5 .5H12.500V12.500H.5ZM3 3H10V10.500H3ZM4.500 5H8.500M4.500 7H8.500M4.500 9H8.500" stroke="#f0f0f0" /></Icon>
        </ViewButton>
        <ViewButton>
          <Icon w={13} h={13}><path d="M.5 .5H12.500V12.500H.5ZM4.500 .5V7.500H12.500M9 .5V7.500" stroke="#f0f0f0" /></Icon>
        </ViewButton>
        <Icon w={9} h={9} ml={8}><path d="M.5 4.500H8.500" stroke="#f0f0f0" strokeWidth="1.600" /></Icon>
        <Slider />
        <Icon w={9} h={9} ml={7}><path d="M.5 4.500H8.500M4.500 .5V8.500" stroke="#f0f0f0" strokeWidth="1.600" /></Icon>
        <Percent><Fit w={25}>85%</Fit></Percent>
      </StatusBar>
    </Window>
  );
}
